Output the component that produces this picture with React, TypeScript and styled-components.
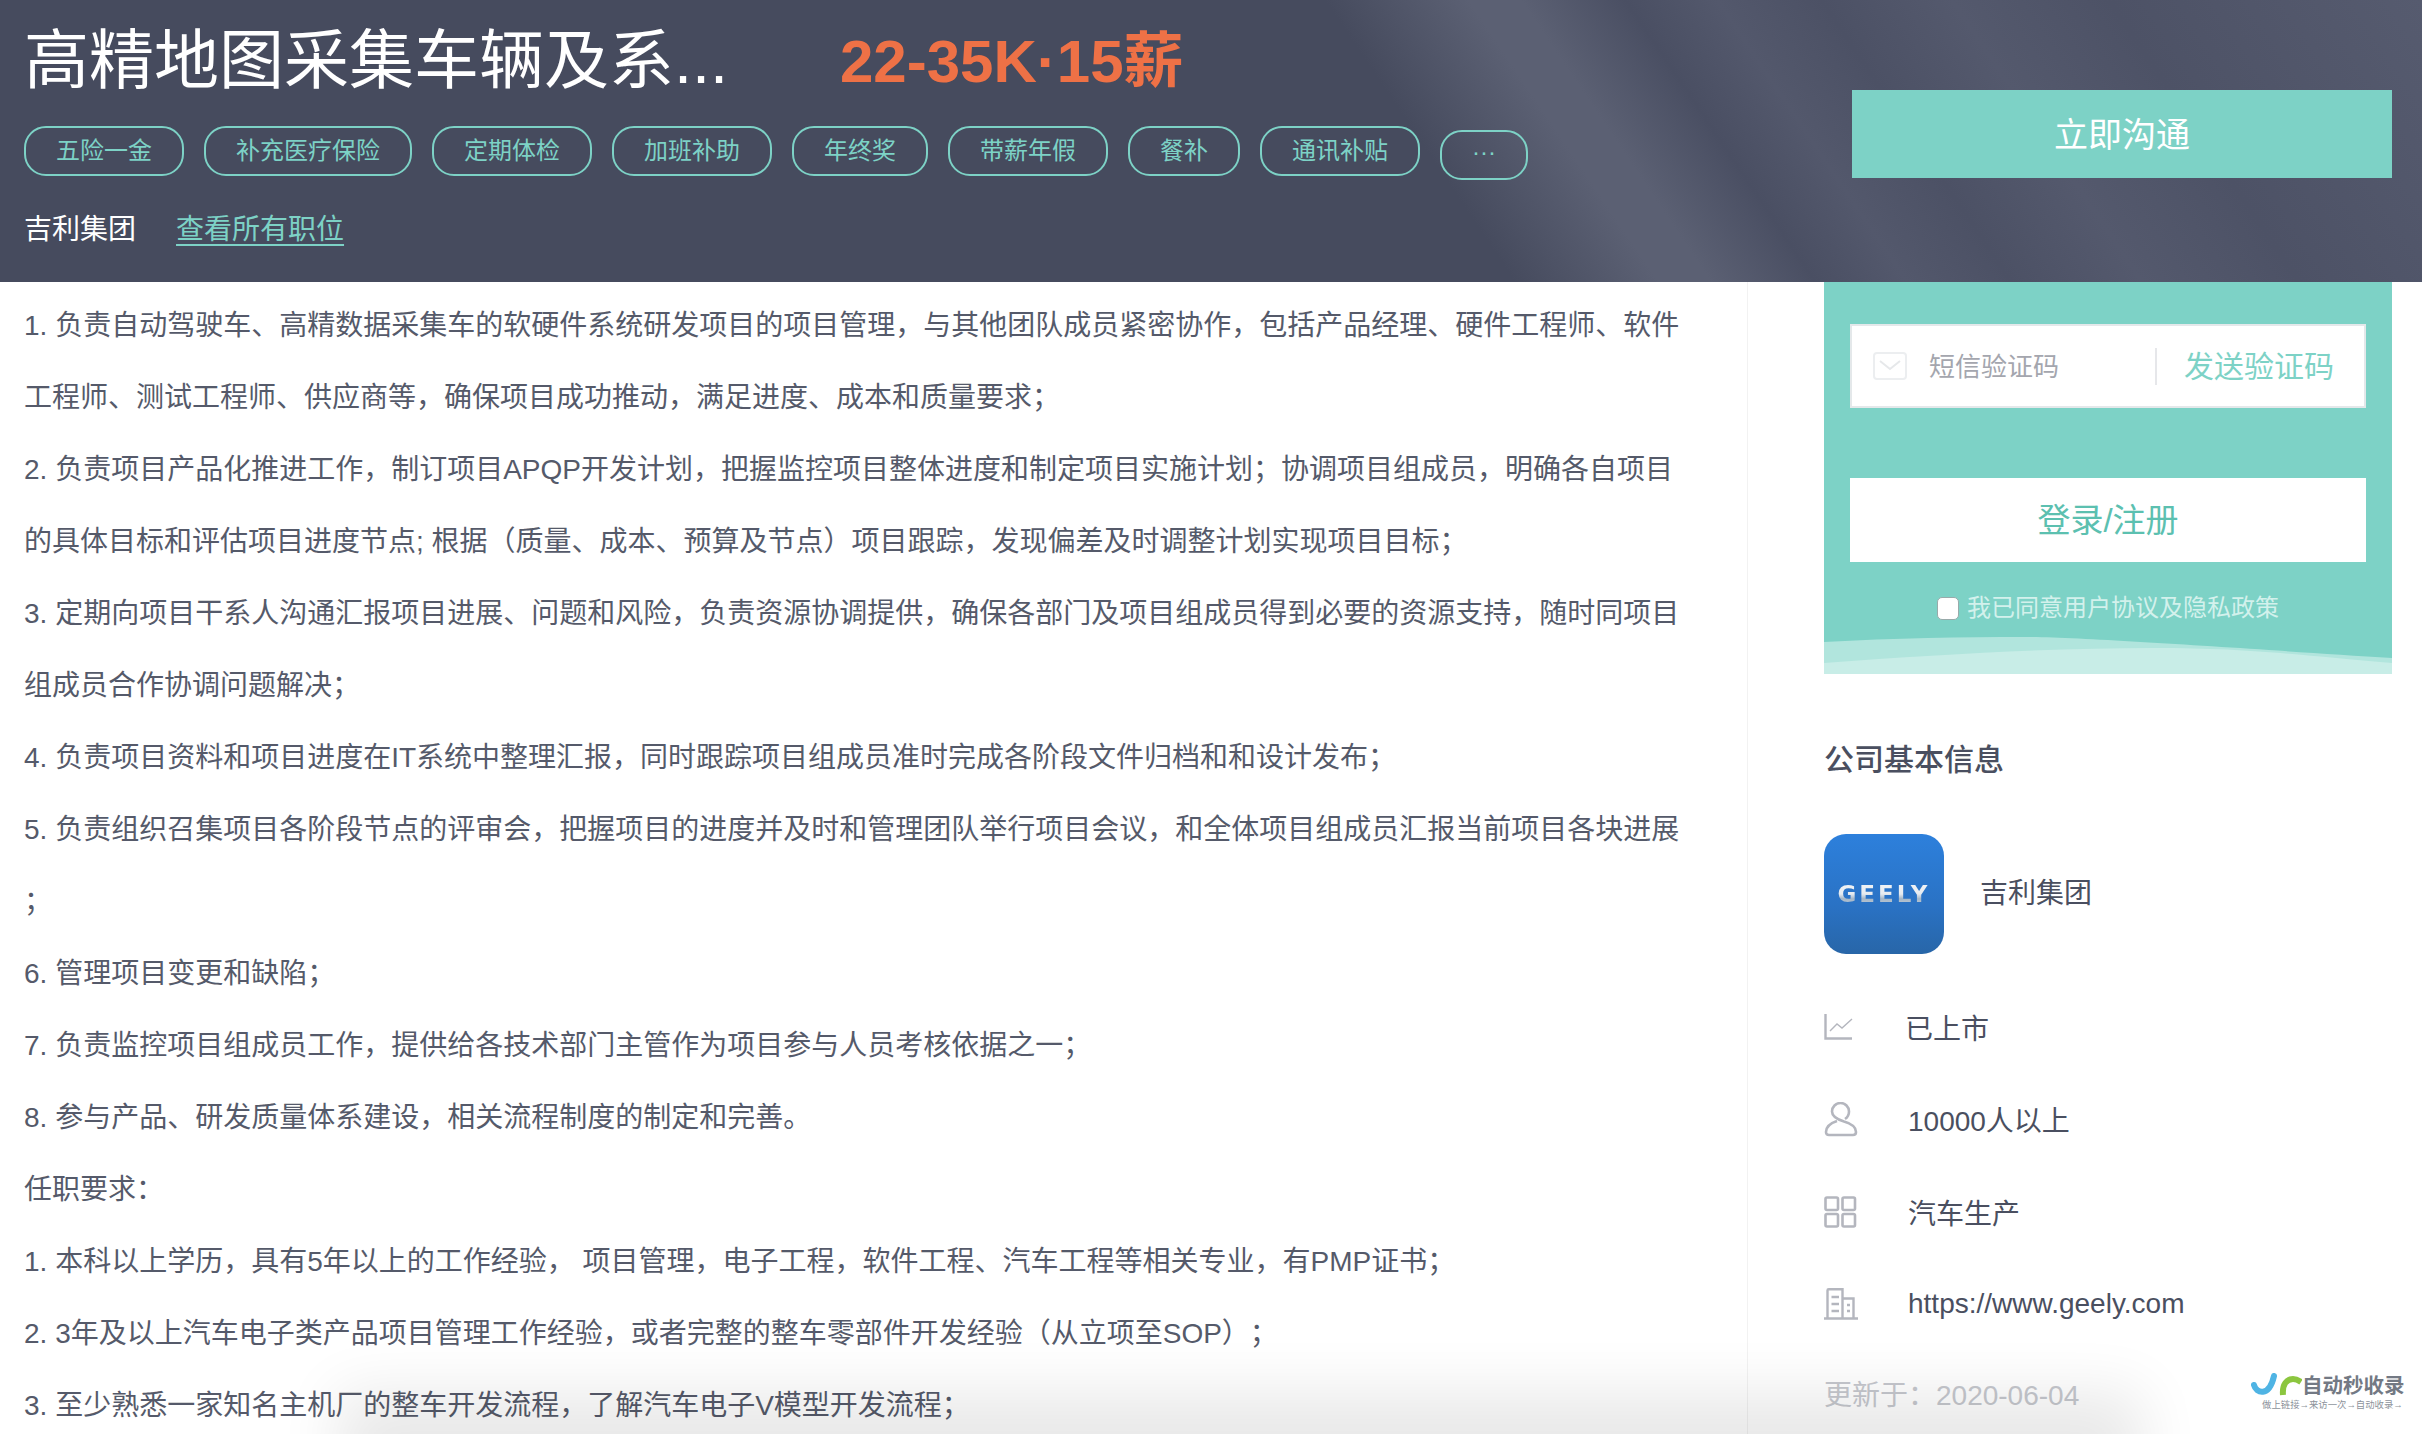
import React from "react";
import styled, { createGlobalStyle } from "styled-components";

const Teal = "#7dd2c6";
const Ink = "#4a4f60";
const IconGrey = "#b4b6be";
const CjkStack = `"Liberation Sans", "Noto Sans CJK SC", sans-serif`;

const GlobalStyle = createGlobalStyle`
  html, body {
    margin: 0;
    padding: 0;
    background: #fff;
  }
  body {
    font-family: ${CjkStack};
    color: ${Ink};
  }
`;

const Page = styled.div`
  position: relative;
  width: 2422px;
  height: 1434px;
  overflow: hidden;
  background: #fff;
`;

const Header = styled.header`
  display: flex;
  justify-content: space-between;
  height: 282px;
  padding: 0 30px 0 24px;
  box-sizing: border-box;
  background-color: #464b5e;
  background-image:
    linear-gradient(
      56deg,
      transparent 58%,
      #5b6073 63.5%,
      #5b6073 65.5%,
      #4a4f63 69.5%,
      #53586c 73%,
      #4c5165 77%,
      #54596d 82%,
      #4d5266 88%,
      #565b6f 100%
    );
`;

const HeaderInfo = styled.div`
  display: flex;
  flex-direction: column;
`;

const TitleRow = styled.div`
  display: flex;
  align-items: center;
  height: 126px;
  padding-bottom: 16px;
  box-sizing: border-box;
`;

const Title = styled.h1`
  width: 816px;
  margin: 0;
  font-size: 65px;
  font-weight: 400;
  color: #fff;
  white-space: nowrap;
`;

const Salary = styled.span`
  font-size: 60px;
  font-weight: 700;
  color: #ee7146;
  white-space: nowrap;
`;

const TagRow = styled.div`
  display: flex;
  gap: 20px;
`;

const Tag = styled.span<{ $drop?: boolean }>`
  display: flex;
  align-items: center;
  height: 50px;
  margin-top: ${(p) => (p.$drop ? "4px" : "0")};
  padding: 0 30px 6px;
  box-sizing: border-box;
  border: 2px solid ${Teal};
  border-radius: 22px;
  font-size: 24px;
  color: ${Teal};
  white-space: nowrap;
`;

const CompanyRow = styled.div`
  display: flex;
  align-items: center;
  gap: 40px;
  margin-top: 28px;
  font-size: 28px;
  line-height: 44px;
  color: #fff;
`;

const AllJobs = styled.a`
  color: ${Teal};
  text-decoration: underline;
  text-underline-offset: 5px;
`;

const ChatButton = styled.button`
  align-self: flex-start;
  width: 540px;
  height: 88px;
  margin-top: 90px;
  padding: 0 0 3px;
  border: 0;
  background: ${Teal};
  font-family: inherit;
  font-size: 34px;
  color: #fff;
`;

const Columns = styled.div`
  display: grid;
  grid-template-columns: 1748px 1fr;
  height: 1152px;
`;

const Description = styled.main`
  padding: 8px 60px 0 24px;
  border-right: 1px solid #f2f2f2;
  font-size: 28px;
  line-height: 72px;
  line-break: anywhere;
  text-spacing-trim: space-all;
  color: #555a6a;
`;

const Para = styled.p`
  margin: 0;
`;

const Side = styled.aside`
  padding: 0 30px 0 76px;
`;

const LoginCard = styled.section`
  position: relative;
  display: flex;
  flex-direction: column;
  height: 392px;
  padding: 42px 26px 0;
  box-sizing: border-box;
  background: ${Teal};
`;

const CodeField = styled.div`
  display: flex;
  align-items: center;
  height: 84px;
  padding-left: 21px;
  box-sizing: border-box;
  border: 2px solid #e4e8ea;
  background: #fff;
`;

const FieldHint = styled.span`
  width: 226px;
  margin: 0 0 3px 22px;
  font-size: 26px;
  color: #a4a6ae;
`;

const SendCode = styled.span`
  height: 36px;
  padding: 1px 0 0 27px;
  border-left: 2px solid #e6e7ea;
  font-size: 30px;
  line-height: 36px;
  color: ${Teal};
  white-space: nowrap;
`;

const LoginButton = styled.button`
  height: 84px;
  margin-top: 70px;
  padding: 0 0 5px;
  border: 0;
  background: #fff;
  font-family: inherit;
  font-size: 33px;
  color: #5cc0b0;
`;

const Agreement = styled.label`
  display: flex;
  align-items: center;
  justify-content: center;
  gap: 8px;
  margin-top: 34px;
  font-size: 24px;
  line-height: 24px;
  color: #d3f1ec;
`;

const AgreeBox = styled.span`
  width: 22px;
  height: 23px;
  border: 1px solid #9aa;
  border-radius: 5px;
  box-sizing: border-box;
  background: #fff;
`;

const CardWave = styled.svg`
  position: absolute;
  left: 0;
  bottom: 0;
  width: 100%;
  height: 38px;
`;

const SectionTitle = styled.h2`
  margin: 64px 0 0;
  font-size: 30px;
  font-weight: 500;
  line-height: 44px;
  color: ${Ink};
`;

const CompanyCard = styled.div`
  display: flex;
  align-items: center;
  gap: 36px;
  margin-top: 52px;
  font-size: 28px;
  line-height: 40px;
  color: ${Ink};
`;

const CompanyName = styled.span`
  margin-bottom: 1px;
`;

const CompanyLogo = styled.div`
  display: flex;
  align-items: center;
  justify-content: center;
  width: 120px;
  height: 120px;
  border-radius: 22px;
  background: linear-gradient(#2d80dc, #2a72c4 60%, #2866a8);
`;

const LogoWord = styled.span`
  font-family: "DejaVu Sans", sans-serif;
  font-size: 23px;
  font-weight: 700;
  letter-spacing: 3px;
  color: transparent;
  background: linear-gradient(#fafbfc, #e6ebf0 50%, #a3b5c6 62%, #eef1f4);
  background-clip: text;
  -webkit-background-clip: text;
`;

const FactList = styled.ul`
  display: flex;
  flex-direction: column;
  margin: 27px 0 0;
  padding: 0;
  list-style: none;
`;

const Fact = styled.li`
  display: flex;
  align-items: center;
  height: 92.3px;
  font-size: 28px;
  color: ${Ink};
`;

const FactIcon = styled.span<{ $width?: number }>`
  display: flex;
  align-items: center;
  width: ${(p) => p.$width ?? 84}px;
  flex: none;
`;

const Updated = styled.div`
  height: 92px;
  font-size: 28px;
  line-height: 92px;
  color: #c6c8ce;
`;

const BottomFade = styled.div`
  position: absolute;
  left: 380px;
  bottom: -40px;
  width: 1720px;
  height: 40px;
  box-shadow: 0 0 60px 42px rgba(0, 0, 0, 0.09);
  pointer-events: none;
`;

const Watermark = styled.div`
  position: absolute;
  left: 2251px;
  top: 1373px;
  display: grid;
  grid-template-columns: 51px auto;
  width: 152px;
  color: #737984;
`;

const WatermarkName = styled.span`
  font-size: 20.5px;
  font-weight: 700;
  line-height: 26px;
  white-space: nowrap;
`;

const WatermarkLine = styled.span`
  grid-column: 1 / 3;
  margin-left: 11px;
  font-size: 9.4px;
  line-height: 12px;
  white-space: nowrap;
  color: #8d939b;
`;

const benefits = [
  "五险一金",
  "补充医疗保险",
  "定期体检",
  "加班补助",
  "年终奖",
  "带薪年假",
  "餐补",
  "通讯补贴",
];

const duties = [
  "1. 负责自动驾驶车、高精数据采集车的软硬件系统研发项目的项目管理，与其他团队成员紧密协作，包括产品经理、硬件工程师、软件工程师、测试工程师、供应商等，确保项目成功推动，满足进度、成本和质量要求；",
  "2. 负责项目产品化推进工作，制订项目APQP开发计划，把握监控项目整体进度和制定项目实施计划；协调项目组成员，明确各自项目的具体目标和评估项目进度节点; 根据（质量、成本、预算及节点）项目跟踪，发现偏差及时调整计划实现项目目标；",
  "3. 定期向项目干系人沟通汇报项目进展、问题和风险，负责资源协调提供，确保各部门及项目组成员得到必要的资源支持，随时同项目组成员合作协调问题解决；",
  "4. 负责项目资料和项目进度在IT系统中整理汇报，同时跟踪项目组成员准时完成各阶段文件归档和和设计发布；",
  "5. 负责组织召集项目各阶段节点的评审会，把握项目的进度并及时和管理团队举行项目会议，和全体项目组成员汇报当前项目各块进展；",
  "6. 管理项目变更和缺陷；",
  "7. 负责监控项目组成员工作，提供给各技术部门主管作为项目参与人员考核依据之一；",
  "8. 参与产品、研发质量体系建设，相关流程制度的制定和完善。",
  "任职要求：",
  "1. 本科以上学历，具有5年以上的工作经验， 项目管理，电子工程，软件工程、汽车工程等相关专业，有PMP证书；",
  "2. 3年及以上汽车电子类产品项目管理工作经验，或者完整的整车零部件开发经验（从立项至SOP）；",
  "3. 至少熟悉一家知名主机厂的整车开发流程，了解汽车电子V模型开发流程；",
];

function MailIcon() {
  return (
    <svg width="34" height="28" viewBox="0 0 34 28" fill="none">
      <rect x="1" y="1" width="32" height="26" rx="3" stroke="#eceef0" strokeWidth="2" />
      <path d="M7 9l10 8 10-8" stroke="#e6e8ea" strokeWidth="2" />
    </svg>
  );
}

function ChartIcon() {
  return (
    <svg width="29" height="26" viewBox="0 0 29 26" fill="none" stroke={IconGrey}>
      <path d="M1.5 0V24.5H28" strokeWidth="2.4" />
      <path d="M6 17L13 10L18 14L28 5" strokeWidth="1.4" />
    </svg>
  );
}

function PersonIcon() {
  return (
    <svg width="34" height="35" viewBox="0 0 34 35" fill="none" stroke={IconGrey} strokeWidth="2.6">
      <path d="M21 17C24 15 25 12 25 9.5A8.5 8.5 0 0 0 8 9.5C8 14 12 17 20 19.5C27 21.5 32 25 32 30C32 32 31 33 29 33H5C3 33 2 32 2 30C2 25 7 21 13 19" />
    </svg>
  );
}

function GridIcon() {
  return (
    <svg width="33" height="32" viewBox="0 0 33 32" fill="none" stroke={IconGrey} strokeWidth="2.6">
      <rect x="1.5" y="1.5" width="12.5" height="12.5" rx="1.5" />
      <rect x="18.5" y="1.5" width="12.5" height="12.5" rx="1.5" />
      <rect x="1.5" y="18" width="12.5" height="12.5" rx="1.5" />
      <rect x="18.5" y="18" width="12.5" height="12.5" rx="1.5" />
    </svg>
  );
}

function BuildingIcon() {
  return (
    <svg width="34" height="32" viewBox="0 0 34 32" fill="none" stroke={IconGrey} strokeWidth="2.4">
      <path d="M3.5 30V2.5C3.500 1.800 4 1.300 4.700 1.300H18.500V30M18.500 10.500H29.500V30M0 30.500H34" />
      <path d="M7.500 9H15M7.500 16H15M7.500 23H15M23 17H26M23 23H26" />
    </svg>
  );
}

export default function App() {
  return (
    <Page>
      <GlobalStyle />
      <Header>
        <HeaderInfo>
          <TitleRow>
            <Title>高精地图采集车辆及系...</Title>
            <Salary>22-35K·15薪</Salary>
          </TitleRow>
          <TagRow>
            {benefits.map((b) => (
              <Tag key={b}>{b}</Tag>
            ))}
            <Tag $drop>···</Tag>
          </TagRow>
          <CompanyRow>
            <span>吉利集团</span>
            <AllJobs>查看所有职位</AllJobs>
          </CompanyRow>
        </HeaderInfo>
        <ChatButton>立即沟通</ChatButton>
      </Header>
      <Columns>
        <Description>
          {duties.map((d) => (
            <Para key={d}>{d}</Para>
          ))}
        </Description>
        <Side>
          <LoginCard>
            <CodeField>
              <MailIcon />
              <FieldHint>短信验证码</FieldHint>
              <SendCode>发送验证码</SendCode>
            </CodeField>
            <LoginButton>登录/注册</LoginButton>
            <Agreement>
              <AgreeBox />
              我已同意用户协议及隐私政策
            </Agreement>
            <CardWave viewBox="0 0 568 38" preserveAspectRatio="none">
              <path d="M0 6C70 2 140 1 200 1S440 14 568 22V38H0Z" fill="#b1e5dd" />
              <path d="M0 27C120 18 230 12 330 12S480 20 568 27V38H0Z" fill="#c8ede7" />
            </CardWave>
          </LoginCard>
          <SectionTitle>公司基本信息</SectionTitle>
          <CompanyCard>
            <CompanyLogo>
              <LogoWord>GEELY</LogoWord>
            </CompanyLogo>
            <CompanyName>吉利集团</CompanyName>
          </CompanyCard>
          <FactList>
            <Fact>
              <FactIcon $width={81}>
                <ChartIcon />
              </FactIcon>
              已上市
            </Fact>
            <Fact>
              <FactIcon>
                <PersonIcon />
              </FactIcon>
              10000人以上
            </Fact>
            <Fact>
              <FactIcon>
                <GridIcon />
              </FactIcon>
              汽车生产
            </Fact>
            <Fact>
              <FactIcon>
                <BuildingIcon />
              </FactIcon>
              https://www.geely.com
            </Fact>
          </FactList>
          <Updated>更新于：2020-06-04</Updated>
        </Side>
      </Columns>
      <BottomFade />
      <Watermark>
        <svg width="51" height="26" viewBox="0 0 51 26" fill="none" strokeWidth="6">
          <path d="M3 12C5 20 18 25 23 3" stroke="#4fb4e4" strokeLinecap="round" />
          <path d="M32 22C31 11 36 6 42 6C45 6 47 7 50 9" stroke="#8cc63f" />
        </svg>
        <WatermarkName>自动秒收录</WatermarkName>
        <WatermarkLine>做上链接→来访一次→自动收录→</WatermarkLine>
      </Watermark>
    </Page>
  );
}
